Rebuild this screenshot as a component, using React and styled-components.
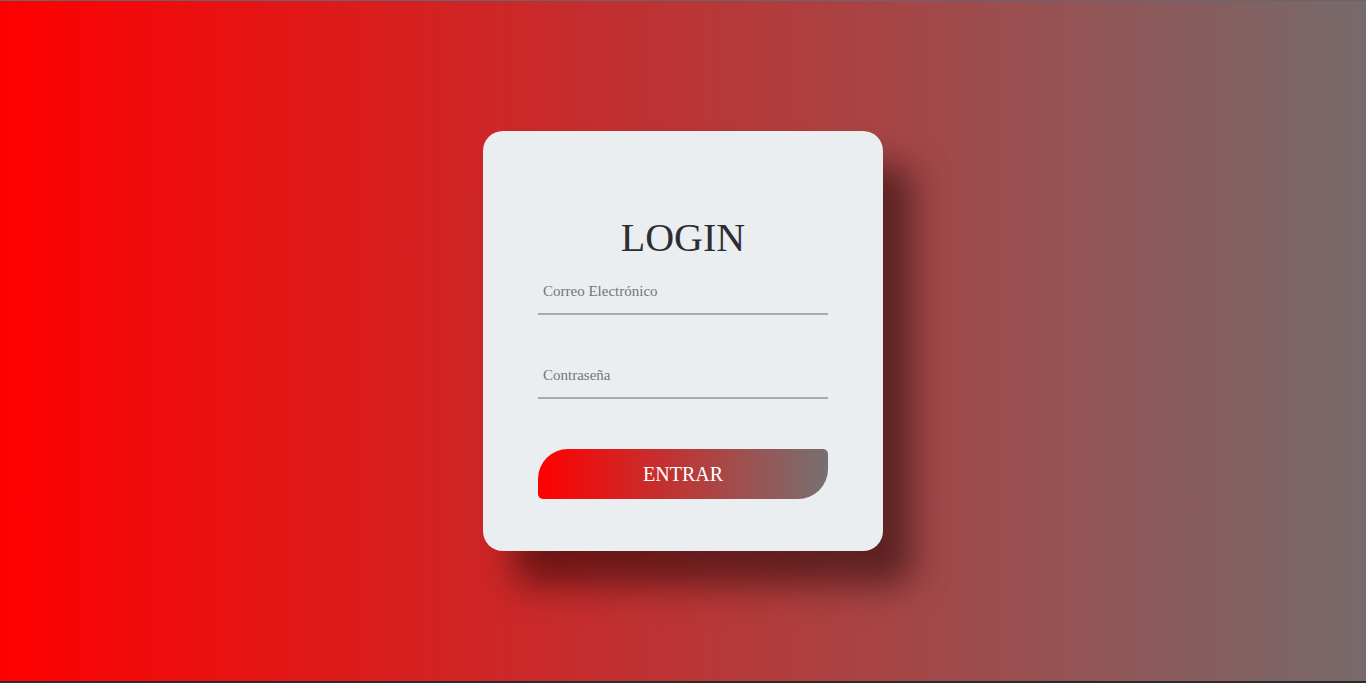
import styled, { createGlobalStyle } from "styled-components";
import { useState } from "react";

const GlobalStyle = createGlobalStyle`
    html, body {
        margin: 0;
        padding: 0;
        height: 100%;
    }
    body {
        font-family: "Liberation Serif", "Times New Roman", serif;
        background: #2b2b2b;
    }
`;

const App = () => {
    const [email, setEmail] = useState("");
    const [password, setPassword] = useState("");

    return (
        <>
            <GlobalStyle />
            <Page>
                <Card onSubmit={(e) => e.preventDefault()}>
                    <Title>LOGIN</Title>
                    <Field
                        type="email"
                        placeholder="Correo Electrónico"
                        value={email}
                        onChange={(e) => setEmail(e.target.value)}
                    />
                    <Field
                        type="password"
                        placeholder="Contraseña"
                        value={password}
                        onChange={(e) => setPassword(e.target.value)}
                    />
                    <SubmitButton type="submit">ENTRAR</SubmitButton>
                </Card>
            </Page>
        </>
    );
};

export default App;

const Page = styled.div.withConfig({
    displayName: "Page",
})`
    height: 681px;
    border-top: 1px solid #6a6470;
    box-sizing: border-box;
    background: linear-gradient(to right, #ff0000, #776a6b);
    display: flex;
    align-items: flex-start;
    justify-content: center;
    padding-top: 130px;
`;

const Card = styled.form.withConfig({
    displayName: "Card",
})`
    width: 400px;
    height: 420px;
    box-sizing: border-box;
    background: #eaeef1;
    border-radius: 20px;
    box-shadow: 30px 34px 34px rgba(20, 0, 0, 0.5);
    display: flex;
    flex-direction: column;
    align-items: center;
    padding: 84px 55px 0;
`;

const Title = styled.h1.withConfig({
    displayName: "Title",
})`
    margin: 0 0 16px;
    font-family: "Liberation Serif", serif;
    font-weight: normal;
    font-size: 40px;
    line-height: 46px;
    color: #2d2d33;
`;

const Field = styled.input.withConfig({
    displayName: "Field",
})`
    width: 290px;
    height: 38px;
    box-sizing: border-box;
    border: none;
    border-bottom: 2px solid #aaaaaa;
    background: transparent;
    outline: none;
    padding: 0 5px 7px;
    margin-bottom: 46px;
    font-family: "Liberation Serif", serif;
    font-size: 15px;
    color: #333;
    &::placeholder {
        color: #757575;
    }
`;

const SubmitButton = styled.button.withConfig({
    displayName: "SubmitButton",
})`
    width: 290px;
    height: 50px;
    margin-top: 4px;
    border: none;
    border-radius: 30px 5px 30px 5px;
    background: linear-gradient(to right, #ff0000, #777070);
    color: #ffffff;
    font-family: "Liberation Serif", serif;
    font-size: 20px;
    cursor: pointer;
`;
